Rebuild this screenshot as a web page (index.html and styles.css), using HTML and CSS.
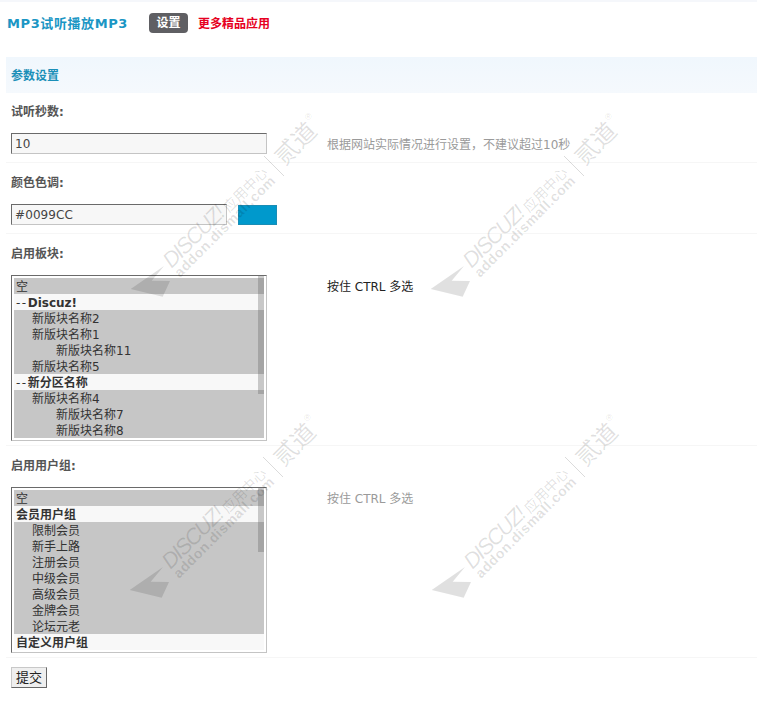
FILE: index.html
```html
<!DOCTYPE html>
<html lang="zh-CN">
<head>
<meta charset="utf-8">
<title>MP3试听播放MP3</title>
<link rel="stylesheet" href="styles.css">
</head>
<body>
<div class="page">
  <div class="topline"></div>
  <header class="topbar">
    <h1 class="title">MP3试听播放MP3</h1>
    <a class="tab">设置</a>
    <a class="more">更多精品应用</a>
  </header>
  <h2 class="section">参数设置</h2>
  <form class="form">
    <div class="row row-first">
      <div class="label">试听秒数:</div>
      <div class="field">
        <div class="control"><div class="input">10</div></div>
        <div class="hint">根据网站实际情况进行设置，不建议超过10秒</div>
      </div>
    </div>
    <div class="row">
      <div class="label">颜色色调:</div>
      <div class="field">
        <div class="control color-control"><div class="input input-color">#0099CC</div><div class="swatch"></div></div>
      </div>
    </div>
    <div class="row row-list">
      <div class="label">启用板块:</div>
      <div class="field">
        <div class="control">
          <div class="listbox">
            <div class="opt">空</div>
            <div class="opt group"><span class="dash">--</span>Discuz!</div>
            <div class="opt l1">新版块名称2</div>
            <div class="opt l1">新版块名称1</div>
            <div class="opt l2">新版块名称11</div>
            <div class="opt l1">新版块名称5</div>
            <div class="opt group"><span class="dash">--</span>新分区名称</div>
            <div class="opt l1">新版块名称4</div>
            <div class="opt l2">新版块名称7</div>
            <div class="opt l2">新版块名称8</div>
            <div class="thumb"></div>
          </div>
        </div>
        <div class="hint hint-dark">按住 CTRL 多选</div>
      </div>
    </div>
    <div class="row row-list">
      <div class="label">启用用户组:</div>
      <div class="field">
        <div class="control">
          <div class="listbox">
            <div class="opt">空</div>
            <div class="opt group">会员用户组</div>
            <div class="opt l1">限制会员</div>
            <div class="opt l1">新手上路</div>
            <div class="opt l1">注册会员</div>
            <div class="opt l1">中级会员</div>
            <div class="opt l1">高级会员</div>
            <div class="opt l1">金牌会员</div>
            <div class="opt l1">论坛元老</div>
            <div class="opt group">自定义用户组</div>
            <div class="thumb thumb-short"></div>
          </div>
        </div>
        <div class="hint">按住 CTRL 多选</div>
      </div>
    </div>
    <div class="submit"><span class="button">提交</span></div>
  </form>

  <svg class="watermark wm-a" viewBox="0 0 200 200">
    <polygon points="4.7,185 38,162 25.7,176.7 44,177 36.7,192.7"/>
    <text class="wm-brand" transform="translate(45.5 165) rotate(-45)" textLength="78">DISCUZ!</text>
    <text class="wm-cn" transform="translate(103 109) rotate(-45)">应用中心</text>
    <line class="wm-sep" x1="138" y1="52" x2="158" y2="72"/>
    <text class="wm-dao" transform="translate(158.5 62.5) rotate(-45)">贰道</text>
    <text class="wm-reg" x="179" y="16">®</text>
    <text class="wm-url" transform="translate(54 174) rotate(-45)" textLength="136">addon.dismall.com</text>
  </svg>
  <svg class="watermark wm-b" viewBox="0 0 200 200">
    <polygon points="4.7,185 38,162 25.7,176.7 44,177 36.7,192.7"/>
    <text class="wm-brand" transform="translate(45.5 165) rotate(-45)" textLength="78">DISCUZ!</text>
    <text class="wm-cn" transform="translate(103 109) rotate(-45)">应用中心</text>
    <line class="wm-sep" x1="138" y1="52" x2="158" y2="72"/>
    <text class="wm-dao" transform="translate(158.5 62.5) rotate(-45)">贰道</text>
    <text class="wm-reg" x="179" y="16">®</text>
    <text class="wm-url" transform="translate(54 174) rotate(-45)" textLength="136">addon.dismall.com</text>
  </svg>
  <svg class="watermark wm-c" viewBox="0 0 200 200">
    <polygon points="4.7,185 38,162 25.7,176.7 44,177 36.7,192.7"/>
    <text class="wm-brand" transform="translate(45.5 165) rotate(-45)" textLength="78">DISCUZ!</text>
    <text class="wm-cn" transform="translate(103 109) rotate(-45)">应用中心</text>
    <line class="wm-sep" x1="138" y1="52" x2="158" y2="72"/>
    <text class="wm-dao" transform="translate(158.5 62.5) rotate(-45)">贰道</text>
    <text class="wm-reg" x="179" y="16">®</text>
    <text class="wm-url" transform="translate(54 174) rotate(-45)" textLength="136">addon.dismall.com</text>
  </svg>
  <svg class="watermark wm-d" viewBox="0 0 200 200">
    <polygon points="4.7,185 38,162 25.7,176.7 44,177 36.7,192.7"/>
    <text class="wm-brand" transform="translate(45.5 165) rotate(-45)" textLength="78">DISCUZ!</text>
    <text class="wm-cn" transform="translate(103 109) rotate(-45)">应用中心</text>
    <line class="wm-sep" x1="138" y1="52" x2="158" y2="72"/>
    <text class="wm-dao" transform="translate(158.5 62.5) rotate(-45)">贰道</text>
    <text class="wm-reg" x="179" y="16">®</text>
    <text class="wm-url" transform="translate(54 174) rotate(-45)" textLength="136">addon.dismall.com</text>
  </svg>
</div>
</body>
</html>
```
FILE: styles.css
```css
* { box-sizing: border-box; }
html, body { margin: 0; padding: 0; background: #fff; }
body {
  font-family: "DejaVu Sans", "Noto Sans CJK SC", sans-serif;
  font-size: 12px;
  color: #444;
}
.page { position: relative; width: 757px; height: 723px; overflow: hidden; }
.topline { height: 2px; background: #f5f7fb; }
.topbar { display: flex; align-items: center; height: 20px; margin-top: 11px; padding-left: 7px; }
.title { margin: 0 0 2px; width: 142px; font-size: 13px; font-weight: 700; letter-spacing: .6px; color: #1b96c4; }
.tab {
  width: 39px; height: 20px; border-radius: 4px; background: #5f5f63; color: #fff;
  font-weight: 700; line-height: 21px; text-align: center;
}
.more { margin: 0 0 2px 10px; font-weight: 700; color: #e60021; }
.section {
  margin: 24px 0 0 6px; height: 36px; padding-left: 5px;
  background: linear-gradient(#f0f7fd, #f5f9fd);
  font-size: 12px; font-weight: 700; line-height: 38px; color: #1b8fb8;
}
.form { margin: 0 0 0 6px; }
.row { padding: 10px 0 8px 5px; border-bottom: 1px solid #f6f6f6; }
.row-first { padding-top: 9px; }
.row-list { padding-bottom: 4px; }
.label { height: 18px; margin-bottom: 13px; font-weight: 700; line-height: 20px; color: #555; }
.field { display: grid; grid-template-columns: 316px 1fr; align-items: start; }
.color-control { display: flex; align-items: flex-start; gap: 11px; }
.control { min-width: 0; }
.input {
  width: 256px; height: 21px; padding-left: 3px;
  background: #f7f7f7;
  border: 1px solid #c4c4c4; border-top-color: #6a6a6a; border-left-color: #6a6a6a;
  font-size: 12px; line-height: 21px; letter-spacing: .1px; color: #444;
}
.input-color { width: 216px; }
.swatch { width: 39px; height: 20px; margin-top: 1px; background: #0099cc; border: 1px solid #1a8db5; }
.hint { padding-top: 3px; font-size: 12px; line-height: 18px; color: #9a9a9a; }
.hint-dark { color: #222; }
.listbox {
  position: relative; width: 256px; height: 166px; padding: 2px 2px 0;
  overflow: hidden; background: #fff;
  border: 1px solid #c4c4c4; border-top-color: #6a6a6a; border-left-color: #6a6a6a;
}
.opt { height: 16px; padding-left: 2px; background: #c6c6c6; font-size: 12px; line-height: 18px; white-space: nowrap; color: #333; }
.opt.group { background: #f8f8f8; font-weight: 700; color: #333; }
.dash { font-weight: 400; letter-spacing: 1.5px; }
.opt.l1 { padding-left: 18px; }
.opt.l2 { padding-left: 42px; }
.thumb { position: absolute; top: 0; right: 2px; width: 6px; height: 118px; background: rgba(90, 90, 90, .3); }
.thumb-short { height: 64px; }
.submit { margin: 9px 0 0 5px; }
.button {
  display: block; width: 36px; height: 21px;
  background: #efefef; border: 1px solid #c8c8c8; border-right-color: #666; border-bottom-color: #666;
  font-size: 13px; line-height: 19px; text-align: center; color: #222;
}
.watermark { position: absolute; width: 200px; height: 200px; pointer-events: none; fill: rgba(0, 0, 0, .12); }
.wm-a { left: 126px; top: 104px; }
.wm-b { left: 426px; top: 104px; }
.wm-c { left: 125px; top: 405px; }
.wm-d { left: 427px; top: 405px; }
.wm-brand { font: italic 400 22px "Liberation Sans", sans-serif; }
.wm-cn { font: 14px "Noto Sans CJK SC", sans-serif; }
.wm-dao { font: 24px "Noto Sans CJK SC", sans-serif; }
.wm-reg { font: 9px "Liberation Sans", sans-serif; }
.wm-url { font: 700 14px "Liberation Sans", sans-serif; }
.wm-sep { stroke: rgba(0, 0, 0, .14); stroke-width: 1; }
```
